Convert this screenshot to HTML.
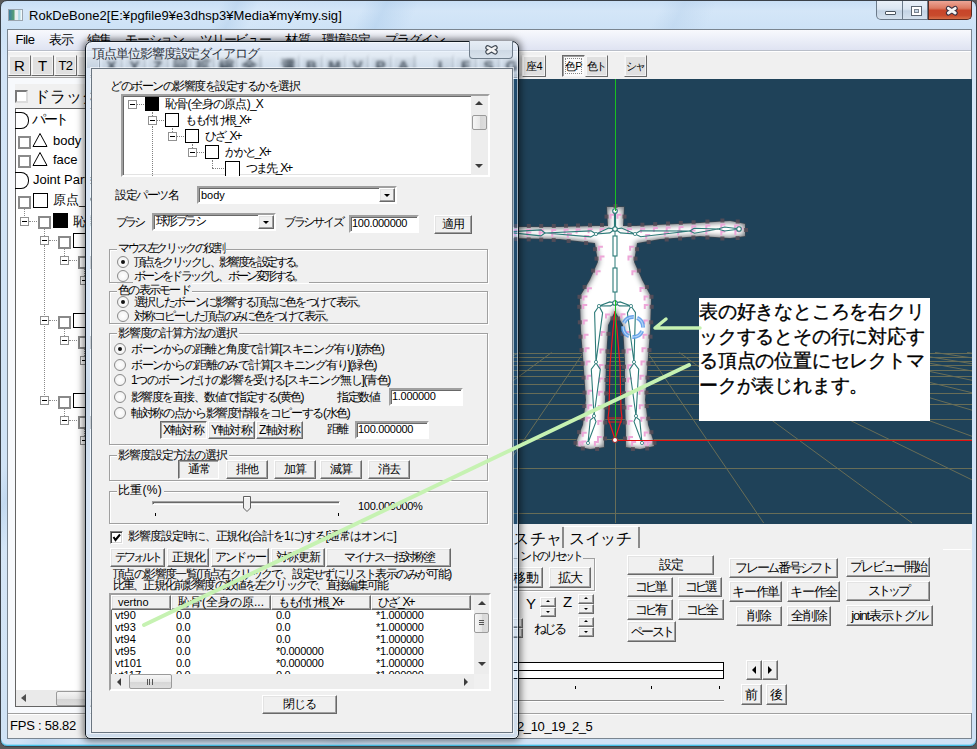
<!DOCTYPE html>
<html><head><meta charset="utf-8">
<style>
*{margin:0;padding:0;box-sizing:border-box}
html,body{width:977px;height:749px;overflow:hidden}
body{position:relative;font-family:"Liberation Sans",sans-serif;font-size:12px;color:#000;background:#595959}
.a{position:absolute}
.frame{left:0;top:0;width:977px;height:747px;border:1px solid #3a4048;border-radius:7px 7px 7px 7px;box-shadow:inset 0 -1px 0 #46c0e6,inset 0 -2px 0 #9ed6f0;
 background:linear-gradient(115deg,rgba(255,255,255,0) 0,rgba(255,255,255,0) 200px,rgba(170,200,230,0.35) 215px,rgba(255,255,255,0.1) 235px,rgba(255,255,255,0) 330px,rgba(160,195,230,0.35) 350px,rgba(255,255,255,0) 380px,rgba(255,255,255,0) 600px,rgba(170,200,230,0.3) 620px,rgba(255,255,255,0) 650px),linear-gradient(180deg,#c8def5 0px,#d4e6f8 10px,#cde2f6 28px,#d3e5f7 60px,#cfe2f5 100%)}
.bl{border-bottom:2px solid #35b5dc}
.client{left:7px;top:29px;width:965px;height:710px;background:#f0f0f0;border:1px solid #7a8590}
.menubar{left:8px;top:30px;width:963px;height:21px;background:linear-gradient(180deg,#f8f9fd 0,#eceff8 45%,#dfe3f2 100%);border-bottom:1px solid #b9bec9}
.menubar span{position:absolute;top:2px;font-size:14px;color:#000}
.tb{background:#e0e0e0;border:1px solid;border-color:#f4f4f4 #6a6a6a #6a6a6a #f4f4f4;box-shadow:inset 1px 1px 0 #f6f6f6,inset -1px -1px 0 #f2f2f2;font-size:12px;text-align:center;line-height:19px}
.btn{position:absolute;background:#f0f0f0;border:1px solid;border-color:#fff #696969 #696969 #fff;box-shadow:inset -1px -1px 0 #a0a0a0, inset 1px 1px 0 #e3e3e3;text-align:center;font-size:12px;white-space:nowrap;overflow:hidden}
.btnp{position:absolute;background:#f0f0f0;border:1px solid;border-color:#696969 #fff #fff #696969;box-shadow:inset 1px 1px 0 #a0a0a0;text-align:center;font-size:12px;white-space:nowrap;overflow:hidden}
.sunk{position:absolute;background:#fff;border:1px solid;border-color:#a0a0a0 #fff #fff #a0a0a0;box-shadow:inset 1px 1px 0 #696969}
.t{position:absolute;white-space:nowrap;font-size:12px;line-height:14px}
.grp{position:absolute;border:1px solid #a0a0a0;box-shadow:1px 1px 0 #fff, inset 1px 1px 0 #fff}
.lbl{position:absolute;background:#f0f0f0;padding:0 2px 0 1px;white-space:nowrap;font-size:12px;line-height:14px}
.radio{position:absolute;width:12px;height:12px;border-radius:50%;border:1px solid #8a8a8a;background:radial-gradient(circle,#fff 0,#f4f4f4 60%,#ddd 100%)}
.radio.on::after{content:"";position:absolute;left:3px;top:3px;width:4px;height:4px;border-radius:50%;background:#111}
.sq{position:absolute;width:14px;height:14px;border:1px solid #000;background:#fff}
.exp{position:absolute;width:9px;height:9px;border:1px solid #919191;background:#fff}
.exp::after{content:"";position:absolute;left:1px;top:3px;width:5px;height:1px;background:#000}
</style></head><body>
<div class="a frame"></div>

<!-- title -->
<div class="a" style="left:8px;top:9px;width:15px;height:12px;border:1px solid #9aa4ae;background:linear-gradient(90deg,#3a7fa0 0,#5aa070 40%,#e8eef0 45%,#e8eef0 70%,#9ad0e0 75%,#fff 100%)"></div>
<div class="t" style="left:29px;top:7px;font-size:13px;line-height:17px;color:#000;letter-spacing:0.05px">RokDeBone2[E:¥pgfile9¥e3dhsp3¥Media¥my¥my.sig]</div>
<!-- window buttons -->
<div class="a" style="left:876px;top:1px;width:27px;height:19px;border:1px solid #6b7a8a;border-top:none;border-radius:0 0 0 5px;background:linear-gradient(180deg,#e9f0f8 0,#dbe6f2 45%,#c3d3e4 55%,#d4e1ee 100%)"><div class="a" style="left:8px;top:10px;width:11px;height:4px;border:1px solid #4b5560;background:#fff;border-radius:1px"></div></div>
<div class="a" style="left:902px;top:1px;width:26px;height:19px;border:1px solid #6b7a8a;border-top:none;background:linear-gradient(180deg,#e9f0f8 0,#dbe6f2 45%,#c3d3e4 55%,#d4e1ee 100%)"><div class="a" style="left:8px;top:5px;width:11px;height:10px;border:1px solid #5a6470;box-shadow:inset 0 0 0 2px #fff, inset 0 0 0 3px #7a8490"></div></div>
<div class="a" style="left:928px;top:1px;width:44px;height:19px;border:1px solid #5a2a20;border-top:none;border-radius:0 0 5px 0;background:linear-gradient(180deg,#eca596 0,#dc7a62 40%,#c8452a 52%,#c84a2c 80%,#d8704a 100%)"><svg width="44" height="19" style="position:absolute;left:0;top:0"><path d="M19.4 7.4 L26.2 12 M26.2 7.4 L19.4 12" stroke="#3a3040" stroke-width="5" stroke-linecap="round"/><path d="M19.4 7.4 L26.2 12 M26.2 7.4 L19.4 12" stroke="#f4f4f4" stroke-width="2.9" stroke-linecap="round"/></svg></div>
<!-- client -->
<div class="a client"></div>
<div class="a menubar"></div>
<div class="t" style="left:15.5px;top:32px;font-size:13px;line-height:16px;letter-spacing:-0.49px">File</div>
<div class="t" style="left:49px;top:32px;font-size:13px;line-height:16px;letter-spacing:-1.0px">表示</div>
<div class="a" style="left:0;top:0;width:977px;height:41px;overflow:hidden">
<div class="t" style="left:87px;top:32px;font-size:13px;line-height:16px;letter-spacing:-1.5px">編集</div>
<div class="t" style="left:125px;top:32px;font-size:13px;line-height:16px;letter-spacing:-1.2px">モーション</div>
<div class="t" style="left:200px;top:32px;font-size:13px;line-height:16px;letter-spacing:-1.17px">ツリービュー</div>
<div class="t" style="left:285px;top:32px;font-size:13px;line-height:16px;letter-spacing:-0.5px">材質</div>
<div class="t" style="left:322px;top:32px;font-size:13px;line-height:16px;letter-spacing:-1.0px">環境設定</div>
<div class="t" style="left:385px;top:32px;font-size:13px;line-height:16px;letter-spacing:-1.0px">プラグイン</div>
</div>
</div>
<!-- toolbar -->
<div class="a" style="left:8px;top:51px;width:963px;height:28px;background:#f0f0f0;border-top:1px solid #fff"></div>
<div class="a tb" style="left:8px;top:55px;width:23px;height:21px;font-size:15px;line-height:19px">R</div>
<div class="a tb" style="left:31px;top:55px;width:23px;height:21px;font-size:15px;line-height:19px">T</div>
<div class="a tb" style="left:54px;top:55px;width:23px;height:21px;font-size:13px;line-height:19px;letter-spacing:-0.5px">T2</div>
<div class="a tb" style="left:77px;top:55px;width:23px;height:21px"></div>
<div class="a tb" style="left:100px;top:55px;width:23px;height:21px;filter:blur(1.8px);font-weight:bold;font-size:15px;color:#222">X</div>
<div class="a tb" style="left:123px;top:55px;width:23px;height:21px;filter:blur(1.8px);font-weight:bold;font-size:15px;color:#222">Y</div>
<div class="a tb" style="left:146px;top:55px;width:23px;height:21px;filter:blur(1.8px);font-weight:bold;font-size:15px;color:#222">Z</div>
<div class="a tb" style="left:169px;top:55px;width:23px;height:21px;filter:blur(1.8px);font-weight:bold;font-size:15px;color:#222">回</div>
<div class="a tb" style="left:192px;top:55px;width:23px;height:21px;filter:blur(1.8px);font-weight:bold;font-size:15px;color:#222">拡</div>
<div class="a tb" style="left:215px;top:55px;width:23px;height:21px;filter:blur(1.8px);font-weight:bold;font-size:15px;color:#222">縮</div>
<div class="a tb" style="left:238px;top:55px;width:23px;height:21px;filter:blur(1.8px);font-weight:bold;font-size:15px;color:#222">全</div>
<div class="a tb" style="left:277px;top:55px;width:23px;height:21px;filter:blur(1.8px);font-weight:bold;font-size:15px;color:#222">選</div>
<div class="a tb" style="left:300px;top:55px;width:23px;height:21px;filter:blur(1.8px);font-weight:bold;font-size:15px;color:#222">B</div>
<div class="a tb" style="left:323px;top:55px;width:23px;height:21px;filter:blur(1.8px);font-weight:bold;font-size:15px;color:#222">M</div>
<div class="a tb" style="left:346px;top:55px;width:23px;height:21px;filter:blur(1.8px);font-weight:bold;font-size:15px;color:#222">V</div>
<div class="a tb" style="left:369px;top:55px;width:23px;height:21px;filter:blur(1.8px);font-weight:bold;font-size:15px;color:#222">P</div>
<div class="a tb" style="left:392px;top:55px;width:23px;height:21px;filter:blur(1.8px);font-weight:bold;font-size:15px;color:#222">A</div>
<div class="a tb" style="left:431px;top:55px;width:23px;height:21px;filter:blur(1.8px);font-weight:bold;font-size:15px;color:#222">L</div>
<div class="a tb" style="left:454px;top:55px;width:23px;height:21px;filter:blur(1.8px);font-weight:bold;font-size:15px;color:#222">F</div>
<div class="a tb" style="left:477px;top:55px;width:23px;height:21px;filter:blur(1.8px);font-weight:bold;font-size:15px;color:#222">S</div>
<div class="a tb" style="left:500px;top:55px;width:23px;height:21px;filter:blur(1.8px);font-weight:bold;font-size:15px;color:#222">G</div>
<div class="a tb" style="left:522px;top:55px;width:24px;height:22px;font-size:11px;line-height:20px;white-space:nowrap;letter-spacing:-0.5px">座4</div>
<div class="a tb" style="left:562px;top:55px;width:23px;height:22px;border-color:#6a6a6a #f4f4f4 #f4f4f4 #6a6a6a;box-shadow:inset 1px 1px 0 #a0a0a0;background:#fbfbfb;font-size:11px;line-height:20px;white-space:nowrap;letter-spacing:-0.5px"><div class="a" style="left:2px;top:2px;width:17px;height:16px;border:1px dotted #888"></div>色P</div>
<div class="a tb" style="left:585px;top:55px;width:23px;height:22px;font-size:11px;line-height:20px;white-space:nowrap;letter-spacing:-2.5px;text-indent:-2px">色ト</div>
<div class="a tb" style="left:624px;top:55px;width:23px;height:22px;font-size:11px;line-height:20px;white-space:nowrap;letter-spacing:-2.5px;text-indent:-2px">シャ</div>
<!-- left panel -->
<div class="a" style="left:8px;top:77px;width:510px;height:1px;background:#a0a0a0"></div>
<div class="a" style="left:8px;top:78px;width:510px;height:635px;background:#f7f9fc"></div>
<div class="a" style="left:15px;top:84px;width:503px;height:24px;background:#f0f0f0"></div>
<div class="a" style="left:15px;top:90px;width:13px;height:13px;background:#fff;border:2px solid;border-color:#7a7a7a #dcdcdc #dcdcdc #7a7a7a"></div>
<div class="t" style="left:34px;top:88px;font-size:16px;line-height:18px">ドラッグ</div>
<div class="a" style="left:15px;top:108px;width:503px;height:599px;background:#fff;border:1px solid #646464;border-right:none"></div>
<div class="a" style="left:16px;top:690px;width:502px;height:16px;background:#eaeaea"></div>
<div class="a" style="left:21px;top:694px;width:0;height:0;border:4px solid transparent;border-right:5px solid #505050;border-left:none"></div>
<div class="a" style="left:56px;top:691px;width:60px;height:15px;border:1px solid #9a9a9a;border-radius:2px;background:linear-gradient(180deg,#f4f4f4 0,#e6e6e6 50%,#d4d4d4 51%,#dcdcdc 100%)"></div>
<div class="a" style="left:15px;top:112px;width:14px;height:17px;border:1px solid #000;border-left:none;border-radius:0 8px 8px 0"></div>
<div class="t" style="left:32px;top:111px;font-size:14px;line-height:16px;letter-spacing:-2.3px">パート</div>
<div class="a" style="left:18px;top:136px;width:13px;height:13px;border:2px solid #8a8a8a"></div>
<div class="a" style="left:32px;top:132px;width:16px;height:16px"><svg width="16" height="16"><path d="M8 1.5 L15 14.5 L1 14.5 Z" fill="none" stroke="#000" stroke-width="1"/></svg></div>
<div class="t" style="left:53px;top:132px;font-size:13px;line-height:17px">body</div>
<div class="a" style="left:18px;top:155px;width:13px;height:13px;border:2px solid #8a8a8a"></div>
<div class="a" style="left:32px;top:151px;width:16px;height:16px"><svg width="16" height="16"><path d="M8 1.5 L15 14.5 L1 14.5 Z" fill="none" stroke="#000" stroke-width="1"/></svg></div>
<div class="t" style="left:53px;top:151px;font-size:13px;line-height:17px">face</div>
<div class="a" style="left:15px;top:172px;width:14px;height:17px;border:1px solid #000;border-left:none;border-radius:0 8px 8px 0"></div>
<div class="t" style="left:33px;top:171px;font-size:13px;line-height:17px">Joint Parts</div>
<div class="t" style="left:53px;top:191px;font-size:13px;line-height:17px">原点_X</div>
<div class="t" style="left:73px;top:213px;font-size:13px;line-height:17px">恥骨</div>
<div class="a" style="left:44px;top:245px;width:1px;height:156px;border-left:1px dotted #8a8a8a"></div>
<div class="a" style="left:18px;top:196px;width:13px;height:13px;border:2px solid #8a8a8a;background:#fff"></div>
<div class="a" style="left:33px;top:193px;width:15px;height:15px;border:1px solid #000;background:#fff"></div>
<div class="a" style="left:24px;top:209px;width:1px;height:9px;border-left:1px dotted #8a8a8a"></div>
<div class="exp" style="left:20px;top:217px"></div>
<div class="a" style="left:29px;top:221px;width:8px;height:1px;border-top:1px dotted #8a8a8a"></div>
<div class="a" style="left:38px;top:216px;width:13px;height:13px;border:2px solid #8a8a8a;background:#fff"></div>
<div class="a" style="left:53px;top:213px;width:15px;height:15px;border:1px solid #000;background:#000"></div>
<div class="a" style="left:44px;top:229px;width:1px;height:7px;border-left:1px dotted #8a8a8a"></div>
<div class="exp" style="left:40px;top:236px"></div>
<div class="a" style="left:49px;top:240px;width:8px;height:1px;border-top:1px dotted #8a8a8a"></div>
<div class="a" style="left:58px;top:236px;width:13px;height:13px;border:2px solid #8a8a8a;background:#fff"></div>
<div class="a" style="left:73px;top:233px;width:15px;height:15px;border:1px solid #000;background:#fff"></div>
<div class="a" style="left:64px;top:249px;width:1px;height:7px;border-left:1px dotted #8a8a8a"></div>
<div class="exp" style="left:60px;top:256px"></div>
<div class="a" style="left:69px;top:260px;width:8px;height:1px;border-top:1px dotted #8a8a8a"></div>
<div class="a" style="left:78px;top:256px;width:13px;height:13px;border:2px solid #8a8a8a;background:#fff"></div>
<div class="a" style="left:84px;top:269px;width:1px;height:7px;border-left:1px dotted #8a8a8a"></div>
<div class="exp" style="left:80px;top:276px"></div>
<div class="exp" style="left:40px;top:316px"></div>
<div class="a" style="left:49px;top:320px;width:8px;height:1px;border-top:1px dotted #8a8a8a"></div>
<div class="a" style="left:58px;top:316px;width:13px;height:13px;border:2px solid #8a8a8a;background:#fff"></div>
<div class="a" style="left:73px;top:313px;width:15px;height:15px;border:1px solid #000;background:#fff"></div>
<div class="a" style="left:64px;top:329px;width:1px;height:7px;border-left:1px dotted #8a8a8a"></div>
<div class="exp" style="left:60px;top:336px"></div>
<div class="a" style="left:69px;top:340px;width:8px;height:1px;border-top:1px dotted #8a8a8a"></div>
<div class="a" style="left:78px;top:336px;width:13px;height:13px;border:2px solid #8a8a8a;background:#fff"></div>
<div class="a" style="left:84px;top:349px;width:1px;height:7px;border-left:1px dotted #8a8a8a"></div>
<div class="exp" style="left:80px;top:356px"></div>
<div class="exp" style="left:40px;top:396px"></div>
<div class="a" style="left:49px;top:400px;width:8px;height:1px;border-top:1px dotted #8a8a8a"></div>
<div class="a" style="left:58px;top:396px;width:13px;height:13px;border:2px solid #8a8a8a;background:#fff"></div>
<div class="a" style="left:73px;top:393px;width:15px;height:15px;border:1px solid #000;background:#fff"></div>
<div class="a" style="left:64px;top:409px;width:1px;height:7px;border-left:1px dotted #8a8a8a"></div>
<div class="exp" style="left:60px;top:416px"></div>
<div class="a" style="left:69px;top:420px;width:8px;height:1px;border-top:1px dotted #8a8a8a"></div>
<div class="a" style="left:78px;top:416px;width:13px;height:13px;border:2px solid #8a8a8a;background:#fff"></div>
<div class="a" style="left:84px;top:429px;width:1px;height:7px;border-left:1px dotted #8a8a8a"></div>
<div class="exp" style="left:80px;top:436px"></div>


<!-- viewport -->
<div class="a" style="left:505px;top:79px;width:467px;height:445px;background:#1f4259;overflow:hidden">
<svg id="vp" width="467" height="445" style="position:absolute;left:0;top:0"><g stroke="#686d57" stroke-width="1"><line x1="0" y1="434.5" x2="467" y2="434.5"/><line x1="0" y1="389.5" x2="467" y2="389.5"/><line x1="0" y1="360.5" x2="467" y2="360.5"/><line x1="0" y1="340.5" x2="467" y2="340.5"/><line x1="0" y1="325.5" x2="467" y2="325.5"/><line x1="0" y1="314.5" x2="467" y2="314.5"/><line x1="0" y1="305.5" x2="467" y2="305.5"/><line x1="0" y1="297.5" x2="467" y2="297.5"/><line x1="0" y1="291.5" x2="467" y2="291.5"/><line x1="0" y1="286.5" x2="467" y2="286.5"/><line x1="0" y1="282.5" x2="467" y2="282.5"/><line x1="0" y1="278.5" x2="467" y2="278.5"/><line x1="0" y1="274.5" x2="467" y2="274.5"/><line x1="14.6" y1="273.5" x2="-334.2" y2="444"/><line x1="46.6" y1="273.5" x2="-186.0" y2="444"/><line x1="78.5" y1="273.5" x2="-37.7" y2="444"/><line x1="110.5" y1="273.5" x2="110.5" y2="444"/><line x1="142.5" y1="273.5" x2="258.7" y2="444"/><line x1="174.4" y1="273.5" x2="407.0" y2="444"/><line x1="206.4" y1="273.5" x2="555.2" y2="444"/><line x1="238.3" y1="273.5" x2="703.5" y2="444"/><line x1="270.3" y1="273.5" x2="851.7" y2="444"/><line x1="302.3" y1="273.5" x2="999.9" y2="444"/><line x1="334.2" y1="273.5" x2="1148.2" y2="444"/><line x1="366.2" y1="273.5" x2="1296.4" y2="444"/><line x1="398.1" y1="273.5" x2="1444.7" y2="444"/><line x1="430.1" y1="273.5" x2="1592.9" y2="444"/><line x1="462.1" y1="273.5" x2="1741.1" y2="444"/></g>
<defs>
<clipPath id="cp"><path d="M102.0 128.0 L119.0 128.0 L118.0 147.0 L131.0 147.0 L195.0 144.0 L225.0 142.0 L240.0 145.0 L240.0 157.0 L225.0 159.0 L195.0 157.0 L155.0 160.0 L132.0 164.0 L130.0 176.0 L129.0 183.0 L137.0 201.0 L145.0 216.0 L146.0 220.0 L145.0 251.0 L142.0 291.0 L140.0 321.0 L143.0 346.0 L148.0 361.0 L149.0 367.0 L135.0 370.0 L121.0 368.0 L121.0 351.0 L120.0 321.0 L120.0 281.0 L118.0 246.0 L110.0 232.0 L103.0 246.0 L101.0 281.0 L100.0 321.0 L99.0 351.0 L99.0 368.0 L85.0 370.0 L71.0 367.0 L72.0 361.0 L78.0 346.0 L81.0 321.0 L79.0 291.0 L76.0 251.0 L75.0 220.0 L76.0 216.0 L85.0 201.0 L93.0 183.0 L92.0 176.0 L90.0 164.0 L55.0 160.0 L5.0 159.0 L5.0 148.0 L55.0 148.0 L91.0 147.0 L103.0 147.0 Z"/></clipPath>
<filter id="bl" x="-20%" y="-20%" width="140%" height="140%"><feGaussianBlur stdDeviation="2.6"/></filter>
</defs>
<path d="M102.0 128.0 L119.0 128.0 L118.0 147.0 L131.0 147.0 L195.0 144.0 L225.0 142.0 L240.0 145.0 L240.0 157.0 L225.0 159.0 L195.0 157.0 L155.0 160.0 L132.0 164.0 L130.0 176.0 L129.0 183.0 L137.0 201.0 L145.0 216.0 L146.0 220.0 L145.0 251.0 L142.0 291.0 L140.0 321.0 L143.0 346.0 L148.0 361.0 L149.0 367.0 L135.0 370.0 L121.0 368.0 L121.0 351.0 L120.0 321.0 L120.0 281.0 L118.0 246.0 L110.0 232.0 L103.0 246.0 L101.0 281.0 L100.0 321.0 L99.0 351.0 L99.0 368.0 L85.0 370.0 L71.0 367.0 L72.0 361.0 L78.0 346.0 L81.0 321.0 L79.0 291.0 L76.0 251.0 L75.0 220.0 L76.0 216.0 L85.0 201.0 L93.0 183.0 L92.0 176.0 L90.0 164.0 L55.0 160.0 L5.0 159.0 L5.0 148.0 L55.0 148.0 L91.0 147.0 L103.0 147.0 Z" fill="#4e555c" stroke="#3a4650" stroke-width="1.5"/>
<g clip-path="url(#cp)"><path d="M102.0 128.0 L119.0 128.0 L118.0 147.0 L131.0 147.0 L195.0 144.0 L225.0 142.0 L240.0 145.0 L240.0 157.0 L225.0 159.0 L195.0 157.0 L155.0 160.0 L132.0 164.0 L130.0 176.0 L129.0 183.0 L137.0 201.0 L145.0 216.0 L146.0 220.0 L145.0 251.0 L142.0 291.0 L140.0 321.0 L143.0 346.0 L148.0 361.0 L149.0 367.0 L135.0 370.0 L121.0 368.0 L121.0 351.0 L120.0 321.0 L120.0 281.0 L118.0 246.0 L110.0 232.0 L103.0 246.0 L101.0 281.0 L100.0 321.0 L99.0 351.0 L99.0 368.0 L85.0 370.0 L71.0 367.0 L72.0 361.0 L78.0 346.0 L81.0 321.0 L79.0 291.0 L76.0 251.0 L75.0 220.0 L76.0 216.0 L85.0 201.0 L93.0 183.0 L92.0 176.0 L90.0 164.0 L55.0 160.0 L5.0 159.0 L5.0 148.0 L55.0 148.0 L91.0 147.0 L103.0 147.0 Z" fill="none" stroke="#5a6068" stroke-width="3"/><path d="M102.0 128.0 L119.0 128.0 L118.0 147.0 L131.0 147.0 L195.0 144.0 L225.0 142.0 L240.0 145.0 L240.0 157.0 L225.0 159.0 L195.0 157.0 L155.0 160.0 L132.0 164.0 L130.0 176.0 L129.0 183.0 L137.0 201.0 L145.0 216.0 L146.0 220.0 L145.0 251.0 L142.0 291.0 L140.0 321.0 L143.0 346.0 L148.0 361.0 L149.0 367.0 L135.0 370.0 L121.0 368.0 L121.0 351.0 L120.0 321.0 L120.0 281.0 L118.0 246.0 L110.0 232.0 L103.0 246.0 L101.0 281.0 L100.0 321.0 L99.0 351.0 L99.0 368.0 L85.0 370.0 L71.0 367.0 L72.0 361.0 L78.0 346.0 L81.0 321.0 L79.0 291.0 L76.0 251.0 L75.0 220.0 L76.0 216.0 L85.0 201.0 L93.0 183.0 L92.0 176.0 L90.0 164.0 L55.0 160.0 L5.0 159.0 L5.0 148.0 L55.0 148.0 L91.0 147.0 L103.0 147.0 Z" fill="#fff" stroke="#80868c" stroke-width="4" filter="url(#bl)"/></g>
<rect x="108.5" y="125.0" width="4" height="4" fill="#5a4e58" opacity="0.85"/><path d="M108.0 130.0 h5 v2 h-3 v3 h-2 Z" fill="#eda6d8"/><rect x="117.5" y="135.6" width="4" height="4" fill="#5a4e58" opacity="0.85"/><path d="M111.5 134.8 h5 v2 h-3 v3 h-2 Z" fill="#eda6d8"/><rect x="122.5" y="144.0" width="4" height="4" fill="#5a4e58" opacity="0.85"/><path d="M122.0 149.0 h5 v2 h-3 v3 h-2 Z" fill="#eda6d8"/><rect x="135.4" y="143.7" width="4" height="4" fill="#5a4e58" opacity="0.85"/><path d="M135.1 148.7 h5 v2 h-3 v3 h-2 Z" fill="#eda6d8"/><rect x="148.2" y="143.1" width="4" height="4" fill="#5a4e58" opacity="0.85"/><path d="M147.9 148.1 h5 v2 h-3 v3 h-2 Z" fill="#eda6d8"/><rect x="161.0" y="142.5" width="4" height="4" fill="#5a4e58" opacity="0.85"/><path d="M160.7 147.5 h5 v2 h-3 v3 h-2 Z" fill="#eda6d8"/><rect x="173.8" y="141.9" width="4" height="4" fill="#5a4e58" opacity="0.85"/><path d="M173.5 146.9 h5 v2 h-3 v3 h-2 Z" fill="#eda6d8"/><rect x="186.6" y="141.3" width="4" height="4" fill="#5a4e58" opacity="0.85"/><path d="M186.3 146.3 h5 v2 h-3 v3 h-2 Z" fill="#eda6d8"/><rect x="200.4" y="140.5" width="4" height="4" fill="#5a4e58" opacity="0.85"/><path d="M200.3 145.5 h5 v2 h-3 v3 h-2 Z" fill="#eda6d8"/><rect x="215.4" y="139.5" width="4" height="4" fill="#5a4e58" opacity="0.85"/><path d="M215.3 144.5 h5 v2 h-3 v3 h-2 Z" fill="#eda6d8"/><rect x="230.7" y="140.5" width="4" height="4" fill="#5a4e58" opacity="0.85"/><path d="M229.1 145.4 h5 v2 h-3 v3 h-2 Z" fill="#eda6d8"/><rect x="239.0" y="149.0" width="4" height="4" fill="#5a4e58" opacity="0.85"/><path d="M233.0 148.5 h5 v2 h-3 v3 h-2 Z" fill="#eda6d8"/><rect x="230.6" y="157.0" width="4" height="4" fill="#5a4e58" opacity="0.85"/><path d="M229.4 151.0 h5 v2 h-3 v3 h-2 Z" fill="#eda6d8"/><rect x="215.4" y="157.5" width="4" height="4" fill="#5a4e58" opacity="0.85"/><path d="M215.3 151.5 h5 v2 h-3 v3 h-2 Z" fill="#eda6d8"/><rect x="200.4" y="156.5" width="4" height="4" fill="#5a4e58" opacity="0.85"/><path d="M200.3 150.5 h5 v2 h-3 v3 h-2 Z" fill="#eda6d8"/><rect x="186.4" y="156.5" width="4" height="4" fill="#5a4e58" opacity="0.85"/><path d="M185.5 150.5 h5 v2 h-3 v3 h-2 Z" fill="#eda6d8"/><rect x="173.1" y="157.5" width="4" height="4" fill="#5a4e58" opacity="0.85"/><path d="M172.2 151.5 h5 v2 h-3 v3 h-2 Z" fill="#eda6d8"/><rect x="159.7" y="158.5" width="4" height="4" fill="#5a4e58" opacity="0.85"/><path d="M158.8 152.5 h5 v2 h-3 v3 h-2 Z" fill="#eda6d8"/><rect x="141.7" y="161.0" width="4" height="4" fill="#5a4e58" opacity="0.85"/><path d="M140.2 155.1 h5 v2 h-3 v3 h-2 Z" fill="#eda6d8"/><rect x="130.0" y="168.2" width="4" height="4" fill="#5a4e58" opacity="0.85"/><path d="M124.1 166.8 h5 v2 h-3 v3 h-2 Z" fill="#eda6d8"/><rect x="128.5" y="177.6" width="4" height="4" fill="#5a4e58" opacity="0.85"/><path d="M122.5 176.4 h5 v2 h-3 v3 h-2 Z" fill="#eda6d8"/><rect x="131.9" y="189.6" width="4" height="4" fill="#5a4e58" opacity="0.85"/><path d="M126.4 191.3 h5 v2 h-3 v3 h-2 Z" fill="#eda6d8"/><rect x="139.9" y="206.0" width="4" height="4" fill="#5a4e58" opacity="0.85"/><path d="M134.5 208.1 h5 v2 h-3 v3 h-2 Z" fill="#eda6d8"/><rect x="144.5" y="215.8" width="4" height="4" fill="#5a4e58" opacity="0.85"/><path d="M138.6 216.6 h5 v2 h-3 v3 h-2 Z" fill="#eda6d8"/><rect x="144.7" y="225.8" width="4" height="4" fill="#5a4e58" opacity="0.85"/><path d="M138.8 225.1 h5 v2 h-3 v3 h-2 Z" fill="#eda6d8"/><rect x="144.2" y="241.3" width="4" height="4" fill="#5a4e58" opacity="0.85"/><path d="M138.3 240.6 h5 v2 h-3 v3 h-2 Z" fill="#eda6d8"/><rect x="143.5" y="255.7" width="4" height="4" fill="#5a4e58" opacity="0.85"/><path d="M137.5 254.8 h5 v2 h-3 v3 h-2 Z" fill="#eda6d8"/><rect x="142.5" y="269.1" width="4" height="4" fill="#5a4e58" opacity="0.85"/><path d="M136.5 268.2 h5 v2 h-3 v3 h-2 Z" fill="#eda6d8"/><rect x="141.5" y="282.4" width="4" height="4" fill="#5a4e58" opacity="0.85"/><path d="M135.5 281.5 h5 v2 h-3 v3 h-2 Z" fill="#eda6d8"/><rect x="140.5" y="296.6" width="4" height="4" fill="#5a4e58" opacity="0.85"/><path d="M134.5 295.7 h5 v2 h-3 v3 h-2 Z" fill="#eda6d8"/><rect x="139.5" y="311.6" width="4" height="4" fill="#5a4e58" opacity="0.85"/><path d="M133.5 310.7 h5 v2 h-3 v3 h-2 Z" fill="#eda6d8"/><rect x="139.7" y="325.1" width="4" height="4" fill="#5a4e58" opacity="0.85"/><path d="M133.8 325.3 h5 v2 h-3 v3 h-2 Z" fill="#eda6d8"/><rect x="141.2" y="337.6" width="4" height="4" fill="#5a4e58" opacity="0.85"/><path d="M135.3 337.8 h5 v2 h-3 v3 h-2 Z" fill="#eda6d8"/><rect x="144.4" y="351.2" width="4" height="4" fill="#5a4e58" opacity="0.85"/><path d="M138.7 352.4 h5 v2 h-3 v3 h-2 Z" fill="#eda6d8"/><rect x="147.5" y="361.8" width="4" height="4" fill="#5a4e58" opacity="0.85"/><path d="M141.6 362.2 h5 v2 h-3 v3 h-2 Z" fill="#eda6d8"/><rect x="140.2" y="367.5" width="4" height="4" fill="#5a4e58" opacity="0.85"/><path d="M138.6 361.6 h5 v2 h-3 v3 h-2 Z" fill="#eda6d8"/><rect x="125.9" y="368.0" width="4" height="4" fill="#5a4e58" opacity="0.85"/><path d="M126.1 362.0 h5 v2 h-3 v3 h-2 Z" fill="#eda6d8"/><rect x="118.0" y="357.5" width="4" height="4" fill="#5a4e58" opacity="0.85"/><path d="M123.0 357.0 h5 v2 h-3 v3 h-2 Z" fill="#eda6d8"/><rect x="117.8" y="341.5" width="4" height="4" fill="#5a4e58" opacity="0.85"/><path d="M122.7 340.9 h5 v2 h-3 v3 h-2 Z" fill="#eda6d8"/><rect x="117.3" y="326.5" width="4" height="4" fill="#5a4e58" opacity="0.85"/><path d="M122.2 325.9 h5 v2 h-3 v3 h-2 Z" fill="#eda6d8"/><rect x="117.0" y="312.3" width="4" height="4" fill="#5a4e58" opacity="0.85"/><path d="M122.0 311.8 h5 v2 h-3 v3 h-2 Z" fill="#eda6d8"/><rect x="117.0" y="299.0" width="4" height="4" fill="#5a4e58" opacity="0.85"/><path d="M122.0 298.5 h5 v2 h-3 v3 h-2 Z" fill="#eda6d8"/><rect x="117.0" y="285.7" width="4" height="4" fill="#5a4e58" opacity="0.85"/><path d="M122.0 285.2 h5 v2 h-3 v3 h-2 Z" fill="#eda6d8"/><rect x="116.5" y="270.3" width="4" height="4" fill="#5a4e58" opacity="0.85"/><path d="M121.5 269.5 h5 v2 h-3 v3 h-2 Z" fill="#eda6d8"/><rect x="115.5" y="252.8" width="4" height="4" fill="#5a4e58" opacity="0.85"/><path d="M120.5 252.0 h5 v2 h-3 v3 h-2 Z" fill="#eda6d8"/><rect x="111.1" y="237.5" width="4" height="4" fill="#5a4e58" opacity="0.85"/><path d="M115.4 234.3 h5 v2 h-3 v3 h-2 Z" fill="#eda6d8"/><rect x="105.4" y="237.4" width="4" height="4" fill="#5a4e58" opacity="0.85"/><path d="M100.0 234.5 h5 v2 h-3 v3 h-2 Z" fill="#eda6d8"/><rect x="101.5" y="252.8" width="4" height="4" fill="#5a4e58" opacity="0.85"/><path d="M95.5 252.0 h5 v2 h-3 v3 h-2 Z" fill="#eda6d8"/><rect x="100.5" y="270.3" width="4" height="4" fill="#5a4e58" opacity="0.85"/><path d="M94.5 269.5 h5 v2 h-3 v3 h-2 Z" fill="#eda6d8"/><rect x="99.8" y="285.7" width="4" height="4" fill="#5a4e58" opacity="0.85"/><path d="M93.8 285.1 h5 v2 h-3 v3 h-2 Z" fill="#eda6d8"/><rect x="99.5" y="299.0" width="4" height="4" fill="#5a4e58" opacity="0.85"/><path d="M93.5 298.4 h5 v2 h-3 v3 h-2 Z" fill="#eda6d8"/><rect x="99.2" y="312.4" width="4" height="4" fill="#5a4e58" opacity="0.85"/><path d="M93.2 311.7 h5 v2 h-3 v3 h-2 Z" fill="#eda6d8"/><rect x="98.7" y="326.5" width="4" height="4" fill="#5a4e58" opacity="0.85"/><path d="M92.8 325.9 h5 v2 h-3 v3 h-2 Z" fill="#eda6d8"/><rect x="98.2" y="341.5" width="4" height="4" fill="#5a4e58" opacity="0.85"/><path d="M92.3 340.9 h5 v2 h-3 v3 h-2 Z" fill="#eda6d8"/><rect x="98.0" y="357.5" width="4" height="4" fill="#5a4e58" opacity="0.85"/><path d="M92.0 357.0 h5 v2 h-3 v3 h-2 Z" fill="#eda6d8"/><rect x="90.1" y="368.0" width="4" height="4" fill="#5a4e58" opacity="0.85"/><path d="M88.9 362.0 h5 v2 h-3 v3 h-2 Z" fill="#eda6d8"/><rect x="75.8" y="367.5" width="4" height="4" fill="#5a4e58" opacity="0.85"/><path d="M76.4 361.6 h5 v2 h-3 v3 h-2 Z" fill="#eda6d8"/><rect x="68.5" y="361.8" width="4" height="4" fill="#5a4e58" opacity="0.85"/><path d="M73.4 362.2 h5 v2 h-3 v3 h-2 Z" fill="#eda6d8"/><rect x="72.1" y="351.1" width="4" height="4" fill="#5a4e58" opacity="0.85"/><path d="M76.7 352.7 h5 v2 h-3 v3 h-2 Z" fill="#eda6d8"/><rect x="75.8" y="337.6" width="4" height="4" fill="#5a4e58" opacity="0.85"/><path d="M80.7 337.8 h5 v2 h-3 v3 h-2 Z" fill="#eda6d8"/><rect x="77.3" y="325.1" width="4" height="4" fill="#5a4e58" opacity="0.85"/><path d="M82.2 325.3 h5 v2 h-3 v3 h-2 Z" fill="#eda6d8"/><rect x="77.5" y="311.6" width="4" height="4" fill="#5a4e58" opacity="0.85"/><path d="M82.5 310.7 h5 v2 h-3 v3 h-2 Z" fill="#eda6d8"/><rect x="76.5" y="296.6" width="4" height="4" fill="#5a4e58" opacity="0.85"/><path d="M81.5 295.7 h5 v2 h-3 v3 h-2 Z" fill="#eda6d8"/><rect x="75.5" y="282.4" width="4" height="4" fill="#5a4e58" opacity="0.85"/><path d="M80.5 281.5 h5 v2 h-3 v3 h-2 Z" fill="#eda6d8"/><rect x="74.5" y="269.1" width="4" height="4" fill="#5a4e58" opacity="0.85"/><path d="M79.5 268.2 h5 v2 h-3 v3 h-2 Z" fill="#eda6d8"/><rect x="73.5" y="255.7" width="4" height="4" fill="#5a4e58" opacity="0.85"/><path d="M78.5 254.8 h5 v2 h-3 v3 h-2 Z" fill="#eda6d8"/><rect x="72.8" y="241.3" width="4" height="4" fill="#5a4e58" opacity="0.85"/><path d="M77.7 240.6 h5 v2 h-3 v3 h-2 Z" fill="#eda6d8"/><rect x="72.3" y="225.8" width="4" height="4" fill="#5a4e58" opacity="0.85"/><path d="M77.2 225.1 h5 v2 h-3 v3 h-2 Z" fill="#eda6d8"/><rect x="72.5" y="215.8" width="4" height="4" fill="#5a4e58" opacity="0.85"/><path d="M77.4 216.6 h5 v2 h-3 v3 h-2 Z" fill="#eda6d8"/><rect x="77.6" y="206.0" width="4" height="4" fill="#5a4e58" opacity="0.85"/><path d="M81.9 208.3 h5 v2 h-3 v3 h-2 Z" fill="#eda6d8"/><rect x="86.1" y="189.6" width="4" height="4" fill="#5a4e58" opacity="0.85"/><path d="M90.6 191.3 h5 v2 h-3 v3 h-2 Z" fill="#eda6d8"/><rect x="89.5" y="177.6" width="4" height="4" fill="#5a4e58" opacity="0.85"/><path d="M94.5 176.4 h5 v2 h-3 v3 h-2 Z" fill="#eda6d8"/><rect x="88.0" y="168.2" width="4" height="4" fill="#5a4e58" opacity="0.85"/><path d="M92.9 166.8 h5 v2 h-3 v3 h-2 Z" fill="#eda6d8"/><rect x="79.1" y="162.0" width="4" height="4" fill="#5a4e58" opacity="0.85"/><path d="M79.3 156.0 h5 v2 h-3 v3 h-2 Z" fill="#eda6d8"/><rect x="61.6" y="160.0" width="4" height="4" fill="#5a4e58" opacity="0.85"/><path d="M61.8 154.0 h5 v2 h-3 v3 h-2 Z" fill="#eda6d8"/><rect x="46.7" y="158.9" width="4" height="4" fill="#5a4e58" opacity="0.85"/><path d="M46.3 152.9 h5 v2 h-3 v3 h-2 Z" fill="#eda6d8"/><rect x="34.2" y="158.6" width="4" height="4" fill="#5a4e58" opacity="0.85"/><path d="M33.8 152.6 h5 v2 h-3 v3 h-2 Z" fill="#eda6d8"/><rect x="21.7" y="158.4" width="4" height="4" fill="#5a4e58" opacity="0.85"/><path d="M21.3 152.4 h5 v2 h-3 v3 h-2 Z" fill="#eda6d8"/><rect x="9.2" y="158.1" width="4" height="4" fill="#5a4e58" opacity="0.85"/><path d="M8.8 152.1 h5 v2 h-3 v3 h-2 Z" fill="#eda6d8"/><rect x="2.0" y="151.5" width="4" height="4" fill="#5a4e58" opacity="0.85"/><path d="M7.0 151.0 h5 v2 h-3 v3 h-2 Z" fill="#eda6d8"/><rect x="9.2" y="145.0" width="4" height="4" fill="#5a4e58" opacity="0.85"/><path d="M8.8 150.0 h5 v2 h-3 v3 h-2 Z" fill="#eda6d8"/><rect x="21.8" y="145.0" width="4" height="4" fill="#5a4e58" opacity="0.85"/><path d="M21.2 150.0 h5 v2 h-3 v3 h-2 Z" fill="#eda6d8"/><rect x="34.2" y="145.0" width="4" height="4" fill="#5a4e58" opacity="0.85"/><path d="M33.8 150.0 h5 v2 h-3 v3 h-2 Z" fill="#eda6d8"/><rect x="46.8" y="145.0" width="4" height="4" fill="#5a4e58" opacity="0.85"/><path d="M46.2 150.0 h5 v2 h-3 v3 h-2 Z" fill="#eda6d8"/><rect x="59.0" y="144.8" width="4" height="4" fill="#5a4e58" opacity="0.85"/><path d="M58.6 149.8 h5 v2 h-3 v3 h-2 Z" fill="#eda6d8"/><rect x="71.0" y="144.5" width="4" height="4" fill="#5a4e58" opacity="0.85"/><path d="M70.6 149.5 h5 v2 h-3 v3 h-2 Z" fill="#eda6d8"/><rect x="83.0" y="144.2" width="4" height="4" fill="#5a4e58" opacity="0.85"/><path d="M82.6 149.2 h5 v2 h-3 v3 h-2 Z" fill="#eda6d8"/><rect x="95.0" y="144.0" width="4" height="4" fill="#5a4e58" opacity="0.85"/><path d="M94.5 149.0 h5 v2 h-3 v3 h-2 Z" fill="#eda6d8"/><rect x="99.5" y="135.6" width="4" height="4" fill="#5a4e58" opacity="0.85"/><path d="M104.5 134.8 h5 v2 h-3 v3 h-2 Z" fill="#eda6d8"/><line x1="110" y1="132" x2="110" y2="149" stroke="#2c7a78" stroke-width="2.2"/><rect x="108" y="157" width="4" height="20" fill="none" stroke="#2c7a78" stroke-width="1.1"/><rect x="108" y="189" width="4" height="24" fill="none" stroke="#2c7a78" stroke-width="1.1"/><line x1="110" y1="150" x2="110" y2="157" stroke="#2c7a78" stroke-width="1"/><line x1="110" y1="177" x2="110" y2="189" stroke="#2c7a78" stroke-width="1"/><line x1="110" y1="213" x2="110" y2="224" stroke="#2c7a78" stroke-width="1"/><path d="M110.0 150.0 L103.7 149.1 L91.0 155.0 L104.9 153.9 Z" fill="none" stroke="#2c7a78" stroke-width="1.1"/><path d="M110.0 150.0 L115.4 153.9 L130.0 155.0 L116.6 149.1 Z" fill="none" stroke="#2c7a78" stroke-width="1.1"/><path d="M91.0 155.0 L86.0 151.9 L40.0 154.0 L85.8 157.9 Z" fill="none" stroke="#2c7a78" stroke-width="1.1"/><path d="M40.0 154.0 L36.1 150.9 L0.0 153.0 L35.9 156.9 Z" fill="none" stroke="#2c7a78" stroke-width="1.1"/><path d="M130.0 155.0 L135.7 157.7 L185.0 152.0 L135.3 151.7 Z" fill="none" stroke="#2c7a78" stroke-width="1.1"/><path d="M185.0 152.0 L189.4 154.2 L213.0 150.0 L189.0 149.2 Z" fill="none" stroke="#2c7a78" stroke-width="1.1"/><path d="M213.0 150.0 L219.6 152.0 L235.0 150.0 L219.6 148.0 Z" fill="none" stroke="#2c7a78" stroke-width="1.1"/><path d="M110.0 224.0 L104.8 222.9 L94.0 227.0 L105.6 226.9 Z" fill="none" stroke="#2c7a78" stroke-width="1.1"/><path d="M110.0 224.0 L114.4 226.9 L126.0 227.0 L115.2 222.9 Z" fill="none" stroke="#2c7a78" stroke-width="1.1"/><path d="M94.0 227.0 L89.6 233.5 L91.0 283.0 L97.6 233.9 Z" fill="none" stroke="#2c7a78" stroke-width="1.1"/><path d="M91.0 284.0 L86.3 290.2 L89.0 337.0 L95.3 290.5 Z" fill="none" stroke="#2c7a78" stroke-width="1.1"/><path d="M89.0 338.0 L85.2 341.2 L83.0 364.0 L91.0 342.6 Z" fill="none" stroke="#2c7a78" stroke-width="1.1"/><path d="M126.0 227.0 L122.4 233.9 L129.0 283.0 L130.4 233.5 Z" fill="none" stroke="#2c7a78" stroke-width="1.1"/><path d="M129.0 284.0 L124.7 290.5 L131.0 337.0 L133.7 290.2 Z" fill="none" stroke="#2c7a78" stroke-width="1.1"/><path d="M131.0 338.0 L129.0 342.6 L137.0 364.0 L134.8 341.2 Z" fill="none" stroke="#2c7a78" stroke-width="1.1"/><circle cx="110" cy="132" r="2.3" fill="#fff" stroke="#2c7a78" stroke-width="1.1"/><circle cx="110" cy="150" r="2.3" fill="#fff" stroke="#2c7a78" stroke-width="1.1"/><circle cx="110" cy="224" r="2.3" fill="#fff" stroke="#2c7a78" stroke-width="1.1"/><circle cx="234" cy="150" r="2.3" fill="#fff" stroke="#2c7a78" stroke-width="1.1"/><circle cx="91" cy="155" r="1.6" fill="#fff" stroke="#2c7a78" stroke-width="0.8"/><circle cx="130" cy="155" r="1.6" fill="#fff" stroke="#2c7a78" stroke-width="0.8"/><circle cx="94" cy="227" r="1.6" fill="#fff" stroke="#2c7a78" stroke-width="0.8"/><circle cx="126" cy="227" r="1.6" fill="#fff" stroke="#2c7a78" stroke-width="0.8"/><circle cx="91" cy="283" r="1.6" fill="#fff" stroke="#2c7a78" stroke-width="0.8"/><circle cx="129" cy="283" r="1.6" fill="#fff" stroke="#2c7a78" stroke-width="0.8"/><circle cx="89" cy="337" r="1.6" fill="#fff" stroke="#2c7a78" stroke-width="0.8"/><circle cx="131" cy="337" r="1.6" fill="#fff" stroke="#2c7a78" stroke-width="0.8"/><circle cx="83" cy="364" r="1.6" fill="#fff" stroke="#2c7a78" stroke-width="0.8"/><circle cx="137" cy="364" r="1.6" fill="#fff" stroke="#2c7a78" stroke-width="0.8"/>
<line x1="110" y1="361.5" x2="467" y2="361.5" stroke="#e01010" stroke-width="1"/>
<path d="M110.0 232.0 L112.0 251.0 L115.0 286.0 L116.0 331.0 L117.0 339.0 L110.0 360.0 L103.0 339.0 L104.0 331.0 L105.0 286.0 L108.0 251.0 Z" fill="none" stroke="#f01818" stroke-width="1.2"/><line x1="103" y1="343" x2="117" y2="343" stroke="#f01818" stroke-width="1"/>
<line x1="103" y1="339" x2="117" y2="339" stroke="#f01818" stroke-width="1"/>
<line x1="110.5" y1="0" x2="110.5" y2="132" stroke="#18c020" stroke-width="1"/>
<line x1="110.5" y1="221" x2="110.5" y2="361" stroke="#18c020" stroke-width="1"/>
<circle cx="110" cy="361" r="2.5" fill="#fff" stroke="#a02020" stroke-width="1"/>
<circle cx="128" cy="248" r="10" fill="none" stroke="#5b9be8" stroke-width="4" stroke-dasharray="12.2 3.5" stroke-dashoffset="-4" opacity="0.9"/><circle cx="128" cy="248" r="10" fill="none" stroke="#b8d8f8" stroke-width="1.2" stroke-dasharray="12.2 3.5" stroke-dashoffset="-4" opacity="0.9"/>
</svg>
</div>

<!-- bottom panel -->
<div class="a" style="left:505px;top:524px;width:467px;height:189px;background:#f0f0f0"></div>
<div class="t" style="left:480px;top:529px;font-size:16px;line-height:19px;letter-spacing:0.5px">テクスチャ</div>
<div class="a" style="left:562px;top:527px;width:2px;height:21px;background:#8a8a8a"></div>
<div class="a" style="left:564px;top:526px;width:74px;height:1px;background:#fff"></div>
<div class="a" style="left:638px;top:527px;width:2px;height:21px;background:#8a8a8a"></div>
<div class="t" style="left:569px;top:529px;font-size:16px;line-height:19px;letter-spacing:-0.5px">スイッチ</div>
<div class="a" style="left:943px;top:549px;width:28px;height:1px;background:#fff"></div>
<!-- reset group -->
<div class="a" style="left:500px;top:558px;width:95px;height:33px;border:1px solid #a0a0a0;border-left:none;box-shadow:1px 1px 0 #fff"></div>
<div class="lbl" style="left:519px;top:549px;font-size:12px;line-height:15px;padding-right:3px;letter-spacing:-3.36px">ントのリセット</div>
<div class="btn" style="left:500px;top:567px;width:43px;height:21px;line-height:19px;font-size:13px;text-align:right;padding-right:3px">移動</div>
<div class="btn" style="left:549px;top:567px;width:42px;height:21px;line-height:19px;font-size:13px;letter-spacing:-0.9px">拡大</div>
<div class="t" style="left:526px;top:595px;font-size:15px;line-height:17px">Y</div>
<div class="btn" style="left:540px;top:597px;width:16px;height:10px"></div><div class="a" style="left:546px;top:600px;border-left:2px solid transparent;border-right:2px solid transparent;border-bottom:2px solid #000"></div>
<div class="btn" style="left:540px;top:607px;width:16px;height:10px"></div><div class="a" style="left:546px;top:611px;border-left:2px solid transparent;border-right:2px solid transparent;border-top:2px solid #000"></div>
<div class="t" style="left:563px;top:593px;font-size:15px;line-height:17px">Z</div>
<div class="btn" style="left:578px;top:594px;width:16px;height:10px"></div><div class="a" style="left:584px;top:597px;border-left:2px solid transparent;border-right:2px solid transparent;border-bottom:2px solid #000"></div>
<div class="btn" style="left:578px;top:604px;width:16px;height:10px"></div><div class="a" style="left:584px;top:608px;border-left:2px solid transparent;border-right:2px solid transparent;border-top:2px solid #000"></div>
<div class="btn" style="left:510px;top:618px;width:13px;height:10px"></div>
<div class="btn" style="left:510px;top:628px;width:13px;height:10px"></div>
<div class="t" style="left:534px;top:620px;font-size:13px;line-height:17px;letter-spacing:-2.8px">ねじる</div>
<div class="btn" style="left:578px;top:617px;width:16px;height:10px"></div><div class="a" style="left:584px;top:620px;border-left:2px solid transparent;border-right:2px solid transparent;border-bottom:2px solid #000"></div>
<div class="btn" style="left:578px;top:627px;width:16px;height:10px"></div><div class="a" style="left:584px;top:631px;border-left:2px solid transparent;border-right:2px solid transparent;border-top:2px solid #000"></div>
<!-- buttons -->
<div class="btn" style="left:627px;top:555px;width:87px;height:20px;line-height:18px;font-size:13px;letter-spacing:-1.5px">設定</div>
<div class="btn" style="left:627px;top:577px;width:46px;height:20px;line-height:18px;font-size:13px;letter-spacing:-2.67px">コピ単</div>
<div class="btn" style="left:678px;top:577px;width:44px;height:20px;line-height:18px;font-size:13px;letter-spacing:-2.67px">コピ選</div>
<div class="btn" style="left:627px;top:599px;width:46px;height:21px;line-height:19px;font-size:13px;letter-spacing:-2.67px">コピ有</div>
<div class="btn" style="left:678px;top:599px;width:46px;height:21px;line-height:19px;font-size:13px;letter-spacing:-2.67px">コピ全</div>
<div class="btn" style="left:627px;top:621px;width:49px;height:21px;line-height:19px;font-size:13px;letter-spacing:-2.75px">ペースト</div>
<div class="btn" style="left:729px;top:558px;width:109px;height:20px;line-height:18px;font-size:13px;letter-spacing:-2.33px">フレーム番号シフト</div>
<div class="btn" style="left:846px;top:557px;width:84px;height:20px;line-height:18px;font-size:13px;letter-spacing:-2.19px">プレビュー開始</div>
<div class="btn" style="left:729px;top:581px;width:53px;height:21px;line-height:19px;font-size:13px;letter-spacing:-1.25px">キー作単</div>
<div class="btn" style="left:787px;top:581px;width:53px;height:21px;line-height:19px;font-size:13px;letter-spacing:-1.25px">キー作全</div>
<div class="btn" style="left:846px;top:581px;width:84px;height:20px;line-height:18px;font-size:13px;letter-spacing:-3.0px">ストップ</div>
<div class="btn" style="left:736px;top:606px;width:46px;height:20px;line-height:18px;font-size:13px;letter-spacing:-1.0px">削除</div>
<div class="btn" style="left:787px;top:606px;width:44px;height:20px;line-height:18px;font-size:13px;letter-spacing:-1.0px">全削除</div>
<div class="btn" style="left:846px;top:605px;width:87px;height:21px;line-height:19px;font-size:13px;letter-spacing:-1.23px">joint表示トグル</div>
<!-- timeline -->
<div class="a" style="left:505px;top:662px;width:219px;height:17px;background:#fff;border:1px solid #000"></div>
<div class="a" style="left:505px;top:670px;width:219px;height:1px;background:#000"></div>
<div class="a" style="left:575px;top:686px;width:1px;height:3px;background:#000"></div>
<div class="a" style="left:651px;top:686px;width:1px;height:3px;background:#000"></div>
<div class="a" style="left:719px;top:686px;width:1px;height:3px;background:#000"></div>
<div class="a" style="left:505px;top:700px;width:219px;height:2px;background:#8c8c8c;border-bottom:1px solid #fff"></div>
<div class="btn" style="left:746px;top:660px;width:16px;height:20px"></div><div class="a" style="left:752px;top:666px;border-top:4px solid transparent;border-bottom:4px solid transparent;border-right:4px solid #000"></div>
<div class="btn" style="left:762px;top:660px;width:16px;height:20px"></div><div class="a" style="left:768px;top:666px;border-top:4px solid transparent;border-bottom:4px solid transparent;border-left:4px solid #000"></div>
<div class="btn" style="left:741px;top:684px;width:21px;height:21px;line-height:19px;font-size:13px">前</div>
<div class="btn" style="left:766px;top:684px;width:21px;height:21px;line-height:19px;font-size:13px">後</div>

<!-- status bar -->
<div class="a" style="left:8px;top:713px;width:963px;height:1px;background:#a0a0a0"></div>
<div class="a" style="left:8px;top:714px;width:963px;height:1px;background:#fff"></div>
<div class="t" style="left:10px;top:718px;font-size:13px;line-height:16px;letter-spacing:-0.24px">FPS : 58.82</div>
<div class="t" style="left:517px;top:719px;font-size:13px;line-height:16px;letter-spacing:-0.37px">2_10_19_2_5</div>

<!-- dialog -->
<div class="a" style="left:85px;top:41px;width:434px;height:698px;border:1px solid #101820;border-radius:7px 7px 5px 5px;box-shadow:0 0 7px 2px rgba(0,0,0,0.5), inset 0 0 0 1px rgba(255,255,255,0.55);background:linear-gradient(180deg,rgba(255,255,255,0.55) 0,rgba(255,255,255,0.4) 13px,rgba(255,255,255,0.05) 26px,rgba(255,255,255,0) 27px),rgba(40,125,215,0.16)"></div>


<div class="t" style="left:92px;top:46px;font-size:13px;line-height:16px;color:#2e3440;letter-spacing:-1.07px">頂点単位影響度設定ダイアログ</div>
<div class="a" style="left:469px;top:41px;width:44px;height:18px;border:1px solid #6f7d8b;border-top:none;border-radius:0 0 4px 4px;background:linear-gradient(180deg,#e6edf5 0,#dbe4ee 50%,#cdd8e4 51%,#d8e2ec 100%)"></div>
<div class="a" style="left:484px;top:43px;width:15px;height:13px"><svg width="15" height="13"><path d="M3.8 4.6 L11.2 9 M11.2 4.6 L3.8 9" stroke="#3e4752" stroke-width="5" stroke-linecap="round"/><path d="M3.8 4.6 L11.2 9 M11.2 4.6 L3.8 9" stroke="#f2f2f2" stroke-width="2.8" stroke-linecap="round"/></svg></div>
<div class="a" style="left:86px;top:68px;width:4px;height:666px;background:linear-gradient(180deg,#dde9f7 0,#d9e6f5 250px,#c9d8e8 330px,#d6e3f2 420px,#dbe7f6 100%)"></div><div class="a" style="left:90px;top:67px;width:424px;height:667px;border:1px solid rgba(255,255,255,0.6)"></div><div class="a" style="left:91px;top:68px;width:422px;height:665px;background:#f0f0f0;border:1px solid #6a7580"></div>

<div class="t" style="left:110px;top:79px;font-size:12px;letter-spacing:-1.5px">どのボーンの影響度を設定するかを選択</div>
<!-- tree box -->
<div class="a" style="left:121px;top:94px;width:369px;height:83px;background:#fff;border:2px solid;border-color:#a0a0a0 #fff #fff #a0a0a0;box-shadow:inset 1px 1px 0 #696969, inset -1px -1px 0 #e3e3e3"></div>
<div class="a" style="left:471px;top:96px;width:17px;height:79px;background:#ededed"></div>
<div class="a" style="left:475px;top:101px;width:0;height:0;border-left:4px solid transparent;border-right:4px solid transparent;border-bottom:4px solid #3c3c3c"></div>
<div class="a" style="left:472px;top:115px;width:15px;height:15px;border:1px solid #9a9a9a;border-radius:2px;background:linear-gradient(90deg,#f6f6f6 0,#e8e8e8 50%,#d6d6d6 51%,#dedede 100%)"></div>
<div class="a" style="left:475px;top:164px;width:0;height:0;border-left:4px solid transparent;border-right:4px solid transparent;border-top:4px solid #3c3c3c"></div>
<div class="a" style="left:152px;top:126px;height:50px;border-left:1px dotted #808080"></div><div class="exp" style="left:128px;top:100px"></div><div class="a" style="left:137px;top:104px;width:7px;border-top:1px dotted #808080"></div>
<div class="sq" style="left:145px;top:97px;background:#000"></div>
<div class="t" style="left:165px;top:97px;font-size:12px;letter-spacing:-0.79px">恥骨(全身の原点)_X</div>
<div class="a" style="left:152px;top:112px;height:4px;border-left:1px dotted #808080"></div>
<div class="exp" style="left:148px;top:116px"></div><div class="a" style="left:157px;top:120px;width:7px;border-top:1px dotted #808080"></div>

<div class="sq" style="left:165px;top:113px"></div>
<div class="t" style="left:185px;top:113px;font-size:12px;letter-spacing:-2.09px">もも付け根_X+</div>
<div class="a" style="left:172px;top:128px;height:4px;border-left:1px dotted #808080"></div>
<div class="exp" style="left:168px;top:132px"></div><div class="a" style="left:177px;top:136px;width:7px;border-top:1px dotted #808080"></div>
<div class="sq" style="left:185px;top:129px"></div>
<div class="t" style="left:205px;top:129px;font-size:12px;letter-spacing:-2.04px">ひざ_X+</div>
<div class="a" style="left:192px;top:144px;height:4px;border-left:1px dotted #808080"></div>
<div class="exp" style="left:188px;top:148px"></div><div class="a" style="left:197px;top:152px;width:7px;border-top:1px dotted #808080"></div>
<div class="sq" style="left:205px;top:145px"></div>
<div class="t" style="left:225px;top:145px;font-size:12px;letter-spacing:-2.18px">かかと_X+</div>
<div class="a" style="left:212px;top:160px;height:8px;border-left:1px dotted #808080"></div><div class="a" style="left:212px;top:168px;width:12px;border-top:1px dotted #808080"></div>
<div class="a" style="left:225px;top:161px;width:15px;height:15px;border:1px solid #000;border-bottom:none;background:#fff"></div>
<div class="t" style="left:246px;top:161px;font-size:12px;letter-spacing:-2.11px">つま先_X+</div>

<div class="t" style="left:115px;top:188px;font-size:12px;letter-spacing:-1.5px">設定パーツ名</div>
<div class="a" style="left:197px;top:186px;width:200px;height:18px;background:#fff;border:2px solid;border-color:#a0a0a0 #fff #fff #a0a0a0;box-shadow:inset 1px 1px 0 #696969"></div>
<div class="t" style="left:201px;top:188px;font-size:11px">body</div>
<div class="btn" style="left:379px;top:188px;width:16px;height:14px"></div>
<div class="a" style="left:384px;top:194px;border-left:3px solid transparent;border-right:3px solid transparent;border-top:3px solid #000"></div>

<div class="t" style="left:116px;top:215px;font-size:12px;letter-spacing:-3.0px">ブラシ</div>
<div class="a" style="left:152px;top:213px;width:124px;height:18px;background:#fff;border:2px solid;border-color:#a0a0a0 #fff #fff #a0a0a0;box-shadow:inset 1px 1px 0 #696969"></div>
<div class="t" style="left:156px;top:214px;font-size:12px;letter-spacing:-2.2px">球形ブラシ</div>
<div class="btn" style="left:258px;top:215px;width:16px;height:14px"></div>
<div class="a" style="left:263px;top:221px;border-left:3px solid transparent;border-right:3px solid transparent;border-top:3px solid #000"></div>
<div class="t" style="left:284px;top:215px;font-size:12px;letter-spacing:-2.27px">ブラシサイズ</div>
<div class="a" style="left:349px;top:215px;width:70px;height:18px;background:#fff;border:2px solid;border-color:#a0a0a0 #fff #fff #a0a0a0;box-shadow:inset 1px 1px 0 #696969"></div>
<div class="t" style="left:352px;top:216px;font-size:11px;letter-spacing:-0.3px">100.000000</div>
<div class="btn" style="left:434px;top:215px;width:38px;height:19px;line-height:16px;font-size:12px;letter-spacing:-0.5px">適用</div>

<!-- group 1 -->
<div class="grp" style="left:109px;top:249px;width:379px;height:34px"></div>
<div class="lbl" style="left:117px;top:241px;font-size:12px;letter-spacing:-2.41px">マウス左クリックの役割</div>
<div class="radio on" style="left:117px;top:256px"></div>
<div class="lbl" style="left:133px;top:255px;font-size:12px;letter-spacing:-2.56px">頂点をクリックし、影響度を設定する。</div>
<div class="radio" style="left:117px;top:270px"></div>
<div class="lbl" style="left:133px;top:269px;padding-right:6px;font-size:12px;letter-spacing:-2.63px">ボーンをドラッグし、ボーン変形する。</div>
<!-- group 2 -->
<div class="grp" style="left:109px;top:291px;width:379px;height:33px"></div>
<div class="lbl" style="left:117px;top:283px;font-size:12px;letter-spacing:-1.71px">色の表示モード</div>
<div class="radio on" style="left:117px;top:296px"></div>
<div class="lbl" style="left:133px;top:295px;font-size:12px;letter-spacing:-1.91px">選択したボーンに影響する頂点に色をつけて表示。</div>
<div class="radio" style="left:117px;top:310px"></div>
<div class="lbl" style="left:133px;top:309px;padding-right:8px;font-size:12px;letter-spacing:-2.0px">対称コピーした頂点のみに色をつけて表示。</div>
<!-- group 3 -->
<div class="grp" style="left:109px;top:333px;width:379px;height:112px"></div>
<div class="lbl" style="left:117px;top:326px;font-size:12px;letter-spacing:-1.21px">影響度の計算方法の選択</div>
<div class="radio on" style="left:114px;top:343px"></div>
<div class="t" style="left:131px;top:342px;font-size:12px;letter-spacing:-1.41px">ボーンからの距離と角度で計算[スキニング有り](赤色)</div>
<div class="radio" style="left:114px;top:359px"></div>
<div class="t" style="left:131px;top:358px;font-size:12px;letter-spacing:-1.29px">ボーンからの距離のみで計算[スキニング有り](緑色)</div>
<div class="radio" style="left:114px;top:374px"></div>
<div class="t" style="left:131px;top:373px;font-size:12px;letter-spacing:-1.37px">1つのボーンだけの影響を受ける[スキニング無し](青色)</div>
<div class="radio" style="left:114px;top:391px"></div>
<div class="t" style="left:131px;top:390px;font-size:12px;letter-spacing:-1.56px">影響度を直接、数値で指定する(黄色)</div>
<div class="t" style="left:337px;top:390px;font-size:12px;letter-spacing:-1.5px">指定数値</div>
<div class="a" style="left:389px;top:388px;width:74px;height:18px;background:#fff;border:2px solid;border-color:#a0a0a0 #fff #fff #a0a0a0;box-shadow:inset 1px 1px 0 #696969"></div>
<div class="t" style="left:392px;top:389px;font-size:11px;letter-spacing:-0.3px">1.000000</div>
<div class="radio" style="left:114px;top:407px"></div>
<div class="t" style="left:131px;top:406px;font-size:12px;letter-spacing:-1.34px">軸対称の点から影響度情報をコピーする(水色)</div>
<div class="btnp" style="left:160px;top:421px;width:47px;height:18px;line-height:16px;font-size:12px;letter-spacing:-0.75px">X軸対称</div>
<div class="btn" style="left:208px;top:421px;width:47px;height:18px;line-height:16px;font-size:12px;letter-spacing:-0.75px">Y軸対称</div>
<div class="btn" style="left:256px;top:421px;width:47px;height:18px;line-height:16px;font-size:12px;letter-spacing:-0.59px">Z軸対称</div>
<div class="t" style="left:327px;top:422px;font-size:12px;letter-spacing:-1.75px">距離</div>
<div class="a" style="left:355px;top:421px;width:74px;height:18px;background:#fff;border:2px solid;border-color:#a0a0a0 #fff #fff #a0a0a0;box-shadow:inset 1px 1px 0 #696969"></div>
<div class="t" style="left:358px;top:422px;font-size:11px;letter-spacing:-0.3px">100.000000</div>
<!-- group 4 -->
<div class="grp" style="left:109px;top:455px;width:379px;height:26px"></div>
<div class="lbl" style="left:117px;top:448px;font-size:12px;letter-spacing:-1.1px">影響度設定方法の選択</div>
<div class="btnp" style="left:178px;top:460px;width:41px;height:19px;line-height:17px;font-size:12px;letter-spacing:-1.0px">通常</div>
<div class="btn" style="left:226px;top:460px;width:42px;height:19px;line-height:17px;font-size:12px;letter-spacing:-1.0px">排他</div>
<div class="btn" style="left:274px;top:460px;width:42px;height:19px;line-height:17px;font-size:12px;letter-spacing:-1.0px">加算</div>
<div class="btn" style="left:320px;top:460px;width:42px;height:19px;line-height:17px;font-size:12px;letter-spacing:-1.0px">減算</div>
<div class="btn" style="left:368px;top:460px;width:42px;height:19px;line-height:17px;font-size:12px;letter-spacing:-1.0px">消去</div>
<!-- group 5 -->
<div class="grp" style="left:109px;top:491px;width:379px;height:33px"></div>
<div class="lbl" style="left:117px;top:483px;font-size:12px;letter-spacing:0.27px">比重(%)</div>
<div class="a" style="left:152px;top:501px;width:188px;height:4px;border:1px solid;border-color:#a0a0a0 #fff #fff #a0a0a0;box-shadow:inset 1px 1px 0 #696969;background:#e3e3e3"></div>
<div class="a" style="left:243px;top:496px;width:8px;height:16px"><svg width="8" height="16"><path d="M0.5 0.5 H7.5 V12 L4 15.5 L0.5 12 Z" fill="#f0f0f0" stroke="#606060"/><path d="M1.5 1.5 H6.5" stroke="#fff"/></svg></div>
<div class="a" style="left:155px;top:513px;width:1px;height:3px;background:#000"></div>
<div class="a" style="left:338px;top:513px;width:1px;height:3px;background:#000"></div>
<div class="t" style="left:358px;top:499px;font-size:11px;letter-spacing:-0.3px">100.000000%</div>

<!-- checkbox -->
<div class="a" style="left:110px;top:531px;width:13px;height:13px;background:#fff;border:1px solid;border-color:#808080 #fff #fff #808080;box-shadow:inset 1px 1px 0 #404040,inset -1px -1px 0 #d4d4d4"><svg width="11" height="11" style="position:absolute;left:0;top:0"><path d="M2.5 5 L4.5 8 L9 2.5" fill="none" stroke="#000" stroke-width="2"/></svg></div>
<div class="t" style="left:128px;top:529px;font-size:12px;letter-spacing:-1.06px">影響度設定時に、正規化(合計を1に)する[通常はオンに]</div>
<div class="btn" style="left:110px;top:548px;width:55px;height:19px;line-height:17px;font-size:12px;letter-spacing:-2.88px">デフォルト</div>
<div class="btn" style="left:167px;top:548px;width:42px;height:19px;line-height:17px;font-size:12px;letter-spacing:-1.0px">正規化</div>
<div class="btn" style="left:211px;top:548px;width:58px;height:19px;line-height:17px;font-size:12px;letter-spacing:-2.0px">アンドゥー</div>
<div class="btn" style="left:271px;top:548px;width:54px;height:19px;line-height:17px;font-size:12px;letter-spacing:-1.0px">対称更新</div>
<div class="btn" style="left:326px;top:548px;width:125px;height:19px;line-height:17px;font-size:12px;letter-spacing:-2.0px">マイナス一括対称塗</div>
<div class="t" style="left:113px;top:567px;font-size:12px;letter-spacing:-1.6px">頂点の影響度一覧(頂点右クリックで、設定せずにリスト表示のみが可能)</div>
<div class="t" style="left:113px;top:578px;font-size:12px;letter-spacing:-1.85px">比重、正規化前影響度の数値を左クリックで、直接編集可能</div>

<!-- list -->
<div class="a" style="left:109px;top:593px;width:382px;height:98px;background:#fff;border:2px solid;border-color:#a0a0a0 #fff #fff #a0a0a0;box-shadow:inset 1px 1px 0 #696969"></div>
<div class="btn" style="left:111px;top:595px;width:60px;height:15px;text-align:left;padding-left:6px;line-height:13px;font-size:11px">vertno</div>
<div class="btn" style="left:171px;top:595px;width:100px;height:15px;text-align:left;padding-left:6px;line-height:13px;font-size:12px">恥骨(全身の原...</div>
<div class="btn" style="left:271px;top:595px;width:100px;height:15px;text-align:left;padding-left:6px;line-height:13px;font-size:12px;letter-spacing:-2.09px">もも付け根_X+</div>
<div class="btn" style="left:371px;top:595px;width:100px;height:15px;text-align:left;padding-left:6px;line-height:13px;font-size:12px;letter-spacing:-2.04px">ひざ_X+</div>
<div class="a" style="left:471px;top:595px;width:3px;height:15px;background:#f0f0f0"></div>
<div class="a" style="left:111px;top:610px;width:363px;height:64px;overflow:hidden">
<div class="t" style="left:4px;top:-1px;font-size:11px;line-height:12px">vt90<br>vt93<br>vt94<br>vt95<br>vt101<br>vt117</div>
<div class="t" style="left:65px;top:-1px;font-size:11px;line-height:12px;letter-spacing:-0.3px">0.0<br>0.0<br>0.0<br>0.0<br>0.0<br>0.0</div>
<div class="t" style="left:165px;top:-1px;font-size:11px;line-height:12px;letter-spacing:-0.3px">0.0<br>0.0<br>0.0<br>*0.000000<br>*0.000000<br>0.0</div>
<div class="t" style="left:265px;top:-1px;font-size:11px;line-height:12px;letter-spacing:-0.3px">*1.000000<br>*1.000000<br>*1.000000<br>*1.000000<br>*1.000000<br>*1.000000</div>
</div>
<div class="a" style="left:474px;top:595px;width:15px;height:79px;background:#ededed"></div>
<div class="a" style="left:478px;top:601px;border-left:4px solid transparent;border-right:4px solid transparent;border-bottom:4px solid #3c3c3c"></div>
<div class="a" style="left:474px;top:613px;width:15px;height:20px;border:1px solid #9a9a9a;border-radius:2px;background:linear-gradient(90deg,#f6f6f6 0,#e8e8e8 50%,#d6d6d6 51%,#dedede 100%)"><div class="a" style="left:4px;top:6px;width:5px;height:5px;border-top:1px solid #555;border-bottom:1px solid #555"></div><div class="a" style="left:4px;top:8px;width:5px;height:1px;background:#555"></div></div>
<div class="a" style="left:478px;top:662px;border-left:4px solid transparent;border-right:4px solid transparent;border-top:4px solid #3c3c3c"></div>
<div class="a" style="left:111px;top:674px;width:378px;height:15px;background:#ededed"></div>
<div class="a" style="left:117px;top:678px;border-top:4px solid transparent;border-bottom:4px solid transparent;border-right:4px solid #3c3c3c"></div>
<div class="a" style="left:129px;top:674px;width:43px;height:15px;border:1px solid #9a9a9a;border-radius:2px;background:linear-gradient(180deg,#f6f6f6 0,#e8e8e8 50%,#d6d6d6 51%,#dedede 100%)"><div class="a" style="left:17px;top:4px;width:6px;height:6px;border-left:1px solid #555;border-right:1px solid #555"></div><div class="a" style="left:19px;top:4px;width:1px;height:6px;background:#555"></div></div>
<div class="a" style="left:464px;top:678px;border-top:4px solid transparent;border-bottom:4px solid transparent;border-left:4px solid #3c3c3c"></div>
<div class="a" style="left:474px;top:674px;width:15px;height:15px;background:#f0f0f0"></div>
<div class="btn" style="left:262px;top:695px;width:75px;height:19px;line-height:17px;font-size:12px;letter-spacing:-1.0px">閉じる</div>

<!-- overlay -->
<div class="a" style="left:699px;top:298px;width:231px;height:123px;background:#fff"></div>
<div class="t" style="left:699px;top:300px;width:231px;font-size:19px;line-height:24.5px;white-space:nowrap;letter-spacing:-0.2px;-webkit-text-stroke:0.35px #000">表の好きなところを右クリ<br>ックするとその行に対応す<br>る頂点の位置にセレクトマ<br>ークが表じれます。</div>
<svg class="a" style="left:0;top:0" width="977" height="749">
<line x1="689" y1="365" x2="144" y2="625" stroke="#c6f2b2" stroke-width="4" stroke-linecap="round"/>
<path d="M666 319 L655 328 L700 328" fill="none" stroke="#c6f2b2" stroke-width="3.5" stroke-linecap="round" stroke-linejoin="round"/>
</svg>

</body></html>
